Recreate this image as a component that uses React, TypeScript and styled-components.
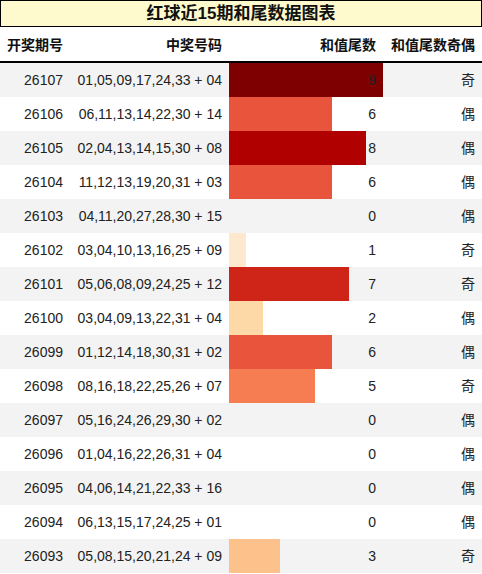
import styled, { createGlobalStyle } from "styled-components";

interface rowProps {
  issue: string;
  numbers: string;
  tail: number;
}

const rows: rowProps[] = [
  { issue: "26107", numbers: "01,05,09,17,24,33 + 04", tail: 9 },
  { issue: "26106", numbers: "06,11,13,14,22,30 + 14", tail: 6 },
  { issue: "26105", numbers: "02,04,13,14,15,30 + 08", tail: 8 },
  { issue: "26104", numbers: "11,12,13,19,20,31 + 03", tail: 6 },
  { issue: "26103", numbers: "04,11,20,27,28,30 + 15", tail: 0 },
  { issue: "26102", numbers: "03,04,10,13,16,25 + 09", tail: 1 },
  { issue: "26101", numbers: "05,06,08,09,24,25 + 12", tail: 7 },
  { issue: "26100", numbers: "03,04,09,13,22,31 + 04", tail: 2 },
  { issue: "26099", numbers: "01,12,14,18,30,31 + 02", tail: 6 },
  { issue: "26098", numbers: "08,16,18,22,25,26 + 07", tail: 5 },
  { issue: "26097", numbers: "05,16,24,26,29,30 + 02", tail: 0 },
  { issue: "26096", numbers: "01,04,16,22,26,31 + 04", tail: 0 },
  { issue: "26095", numbers: "04,06,14,21,22,33 + 16", tail: 0 },
  { issue: "26094", numbers: "06,13,15,17,24,25 + 01", tail: 0 },
  { issue: "26093", numbers: "05,08,15,20,21,24 + 09", tail: 3 },
];

// OrRd-ish scale, index = tail digit
const barColors = [
  "transparent",
  "#fee9cf",
  "#fdd9a7",
  "#fdc28c",
  "#fca46c",
  "#f67d51",
  "#e8553c",
  "#cf2418",
  "#b10000",
  "#7f0000",
];

const UNIT = 17.1;

function App() {
  return (
    <Page>
      <GlobalStyle />
      <Title>红球近15期和尾数据图表</Title>
      <HeadRow>
        <HeadCell>开奖期号</HeadCell>
        <HeadCell>中奖号码</HeadCell>
        <HeadCell>和值尾数</HeadCell>
        <HeadCell>和值尾数奇偶</HeadCell>
      </HeadRow>
      {rows.map((row, index) => (
        <Row key={row.issue} $striped={index % 2 === 0}>
          <Cell>{row.issue}</Cell>
          <Cell>{row.numbers}</Cell>
          <BarCell>
            <Bar style={{ width: row.tail * UNIT, background: barColors[row.tail] }} />
            <BarValue>{row.tail}</BarValue>
          </BarCell>
          <Cell>{row.tail % 2 === 1 ? "奇" : "偶"}</Cell>
        </Row>
      ))}
    </Page>
  );
}

const GlobalStyle = createGlobalStyle`
  body {
    margin: 0;
    background: #ffffff;
    font-family: "Liberation Sans", "Noto Sans CJK SC", sans-serif;
    color: #222222;
  }
`;

const Page = styled.div`
  width: 482px;
`;

const Title = styled.div`
  height: 25px;
  border: 1px solid #000000;
  background-color: #fffacd;
  text-align: center;
  line-height: 25px;
  font-size: 17px;
  font-weight: bold;
  color: #111111;
`;

const columns = "70px 159px 154px 1fr";

const HeadRow = styled.div`
  display: grid;
  grid-template-columns: ${columns};
  height: 34px;
  border-bottom: 2px solid #000000;
  background-color: #ffffff;
`;

const HeadCell = styled.div`
  padding-right: 7px;
  text-align: right;
  line-height: 36px;
  font-size: 14px;
  font-weight: bold;
  color: #111111;
  white-space: nowrap;
`;

const Row = styled.div<{ $striped: boolean }>`
  display: grid;
  grid-template-columns: ${columns};
  height: 34px;
  background-color: ${(p) => (p.$striped ? "#f3f3f3" : "#ffffff")};
`;

const Cell = styled.div`
  padding-right: 7px;
  text-align: right;
  line-height: 34px;
  font-size: 14px;
  white-space: nowrap;
`;

const BarCell = styled.div`
  display: grid;
  grid-template-areas: "stack";
`;

const Bar = styled.div`
  grid-area: stack;
  height: 34px;
`;

const BarValue = styled.div`
  grid-area: stack;
  padding-right: 7px;
  text-align: right;
  line-height: 34px;
  font-size: 14px;
`;

export default App;
